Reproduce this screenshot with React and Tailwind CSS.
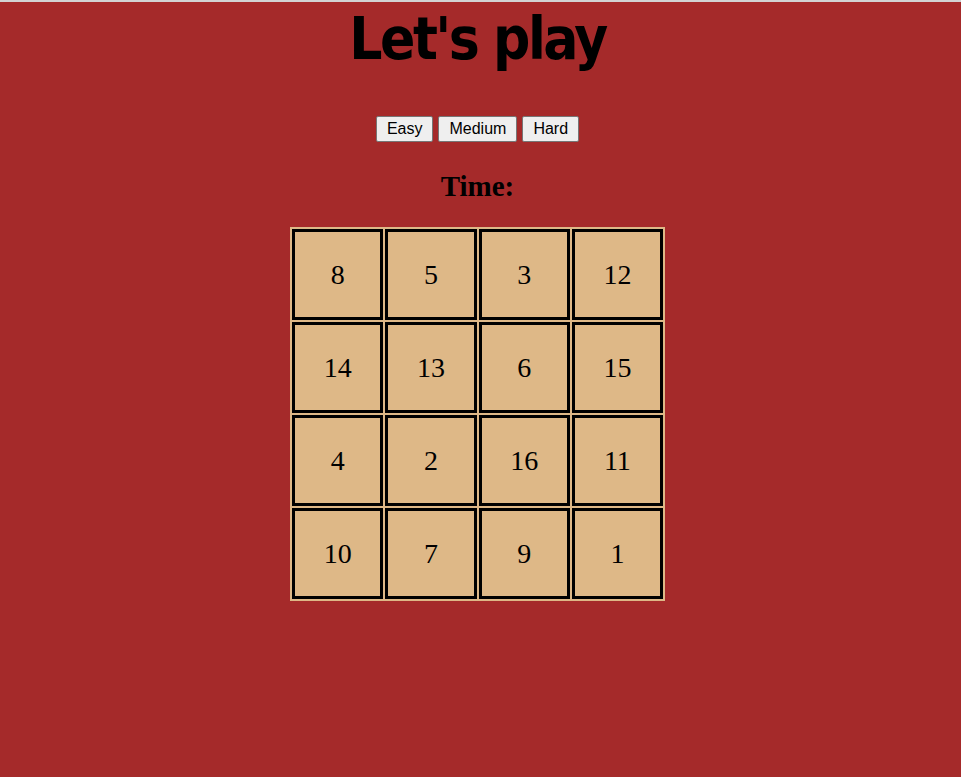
const tiles = [8, 5, 3, 12, 14, 13, 6, 15, 4, 2, 16, 11, 10, 7, 9, 1];

const levels = ["Easy", "Medium", "Hard"];

export default function App() {
  return (
    <div className="min-h-screen bg-[#a52a2a] border-t-2 border-[#d3d3d3]">
      <div className="w-[955px] flex flex-col items-center">
        <h1 className="mt-[1px] text-[58px] leading-[72px] font-bold tracking-[-2.5px] text-black [font-family:'DejaVu_Sans_Condensed','DejaVu_Sans',sans-serif]">
          Let's play
        </h1>

        <div className="mt-[41px] flex gap-[5px]">
          {levels.map((l) => (
            <button
              key={l}
              className="h-[26px] px-[10px] bg-[#efefef] border border-[#767676] rounded-[2px] text-[16px] leading-none text-black font-['Liberation_Sans',Arial,sans-serif]"
            >
              {l}
            </button>
          ))}
        </div>

        <h2 className="mt-[28px] text-[29px] leading-[32px] font-bold text-black font-['Liberation_Serif','Times_New_Roman',serif]">
          Time:
        </h2>

        <div className="mt-[25px] w-[375px] h-[374px] bg-[#deb887] p-[2px] grid grid-cols-4 grid-rows-4 gap-[2px]">
          {tiles.map((n) => (
            <div
              key={n}
              className="border-[3px] border-black flex items-center justify-center text-[28px] text-black font-['Liberation_Serif','Times_New_Roman',serif]"
            >
              {n}
            </div>
          ))}
        </div>
      </div>
    </div>
  );
}
